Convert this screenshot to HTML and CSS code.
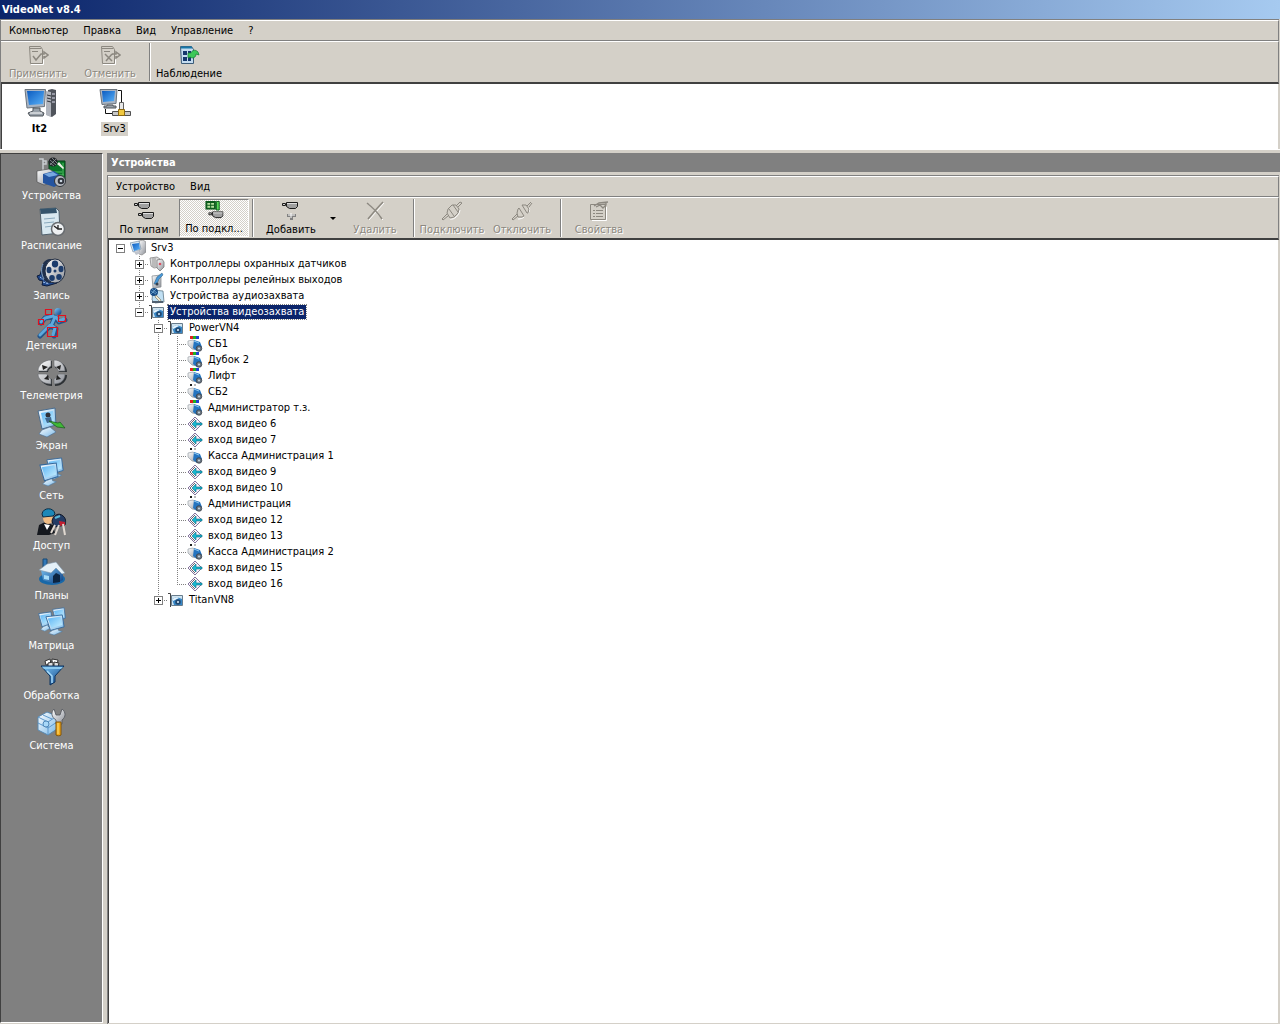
FILE: index.html
```html
<!doctype html>
<html lang="ru">
  <head>
    <meta charset="UTF-8" />
    <meta name="viewport" content="width=device-width, initial-scale=1.0" />
    <title>VideoNet v8.4</title>
    <link rel="stylesheet" href="styles.css">
  </head>
  <body>
    <!-- Icon sprite -->
    <svg class="sprite" width="0" height="0" aria-hidden="true">
      <defs>
        <linearGradient id="g-screen" x1="0" y1="0" x2="1" y2="1">
          <stop offset="0" stop-color="#0c5cc0" />
          <stop offset="1" stop-color="#58b0f8" />
        </linearGradient>
        <linearGradient id="g-ice" x1="0" y1="0" x2="1" y2="1">
          <stop offset="0" stop-color="#ffffff" />
          <stop offset="1" stop-color="#78b8e8" />
        </linearGradient>
        <linearGradient id="g-glass" x1="0" y1="0" x2="1" y2="1">
          <stop offset="0" stop-color="#5cb4f4" />
          <stop offset="1" stop-color="#c8f0ff" />
        </linearGradient>
        <linearGradient id="g-metal" x1="0" y1="0" x2="1" y2="1">
          <stop offset="0" stop-color="#ffffff" />
          <stop offset="1" stop-color="#8c9098" />
        </linearGradient>
        <linearGradient id="g-blue" x1="0" y1="0" x2="1" y2="1">
          <stop offset="0" stop-color="#7cc8f8" />
          <stop offset="1" stop-color="#0c3c80" />
        </linearGradient>
      </defs>

      <symbol id="cam-gray" viewBox="0 0 16 9">
        <path d="M4.500 1.500h11v4l-2 2h-6l-3-2z" fill="#a0a0a0" stroke="#1c1c1c" />
        <path d="M5 2.500h10" stroke="#e0e0e0" />
        <path d="M.5 2.500h3v2h-3z" fill="#d0d0d0" stroke="#1c1c1c" />
      </symbol>
      <symbol id="i-apply" viewBox="0 0 22 20">
        <path d="M4 19.500h12.500V13" fill="none" stroke="#fff" />
        <path d="M2.500 1.500h11l2 3v14h-12z" fill="#d4d0c8" stroke="#8c8880" />
        <path d="M3 3.500h11M5 6.500h6" stroke="#8c8880" />
        <path d="M6 11l3 4 5-6h3V7l4 3-4 3v-2" fill="none" stroke="#8c8880" stroke-width="1.500" />
      </symbol>
      <symbol id="i-cancel" viewBox="0 0 22 20">
        <path d="M4 19.500h12.500V13" fill="none" stroke="#fff" />
        <path d="M2.500 1.500h11l2 3v14h-12z" fill="#d4d0c8" stroke="#8c8880" />
        <path d="M3 3.500h11M5 6.500h6" stroke="#8c8880" />
        <path d="M6 9l7 7M13 9l-6 7M13 9h4V7l4 3-4 3v-2" fill="none" stroke="#8c8880" stroke-width="1.500" />
      </symbol>
      <symbol id="i-watch" viewBox="0 0 22 20">
        <path d="M2.500 1.500h11l2 3v14h-12z" fill="#c4dcf0" stroke="#3c5c78" />
        <path d="M3 2.500h11" stroke="#1878a8" stroke-width="2" />
        <path d="M5 6h4v4H5zM10 6h3v4h-3zM5 12h4v4H5zM10 12h3v4h-3z" fill="#14386c" />
        <path d="M10 8h3c1-3 4-4 7-1l1 3-3-1c0 3-2 4-4 4l-2-1-2 1z" fill="#3cc858" stroke="#147830" stroke-width=".7" />
      </symbol>

      <symbol id="i-pc" viewBox="0 0 32 30">
        <path d="M24 2l4-1 4 1v24l-4 3-5-2z" fill="#50545c" />
        <path d="M22 3l5 1v25l-5-2z" fill="#b0b4bc" />
        <path d="M23 7l4 1M23 10l4 1M23 13l4 1" stroke="#30343c" />
        <path d="M28 6h3M28 10h3M28 14h3" stroke="#dde" />
        <path d="M1 1.500h20.500l-1 17L3 20z" fill="#a8b4c4" stroke="#6c747c" />
        <path d="M3 3h17l-1 13-14 1z" fill="url(#g-screen)" />
        <path d="M9 20h7v3l4 2-1 3H6l-2-3 5-2z" fill="#98a0a8" stroke="#50565c" />
        <path d="M6 25h12" stroke="#fff" />
      </symbol>
      <symbol id="i-pc-net" viewBox="0 0 32 30">
        <path d="M1 1.500h17l-1 14-14 1z" fill="#a8b4c4" stroke="#6c747c" />
        <path d="M3 3h13l-1 10-11 1z" fill="url(#g-screen)" />
        <path d="M8 17h6v1h3v2H5v-2h3z" fill="#98a0a8" stroke="#50565c" />
        <path d="M19 2.500h3.500V14M6.500 21v4.500H14" fill="none" stroke="#111" />
        <path d="M20.500 14.500h4v8h-4z" fill="#e8e8e8" stroke="#606060" />
        <path d="M13.500 23.500h18v4h-18z" fill="#c8c8c8" stroke="#505050" />
        <path d="M19.500 21.500h6v6h-6z" fill="#f0c840" stroke="#8c6810" />
      </symbol>

      <symbol id="i-devices" viewBox="0 0 32 32">
        <path d="M13 4h16v19H13z" fill="#0a7428" stroke="#053c14" />
        <path d="M16 15h10M20 18h8M27 6v12" stroke="#50c060" />
        <path d="M3 2h4v13H3M7 4h3v3H7" fill="none" stroke="#c8ccd0" stroke-width="1.500" />
        <circle cx="17" cy="5" r="4.500" fill="#202428" />
        <path d="M14 3l6 5M14 6l4 3M16 1l5 5M20 2l-6 6" stroke="#90989c" stroke-width=".8" />
        <path d="M21 7l6 5 1-1-5-6z" fill="#f0f0e8" />
        <path d="M1 14l12-2 7 4v9L8 28l-7-3z" fill="url(#g-metal)" stroke="#444" stroke-width=".6" />
        <path d="M7 17l11-3 6 4v9l-6 3-11-4z" fill="#2454a0" />
        <path d="M8 17l9-2 5 3-9 2z" fill="#78a8e0" />
        <circle cx="24" cy="24" r="5.500" fill="#b8bcc4" stroke="#303438" />
        <circle cx="25" cy="24" r="3.300" fill="#30343c" />
        <circle cx="25" cy="24" r="1.300" fill="#c8d4e0" />
      </symbol>
      <symbol id="i-schedule" viewBox="0 0 32 32">
        <path d="M4 2l16-1 3 3 1 22-18 2z" fill="#d8e8f0" stroke="#50606c" />
        <path d="M4 2l16-1 1 5-16 1z" fill="#34546c" />
        <path d="M8 12l11-1M8 16l10-1M9 20l8-1" stroke="#88a8bc" />
        <circle cx="22" cy="22" r="6.500" fill="#eef0f2" stroke="#686c70" stroke-width="1.500" />
        <path d="M22 18v4h4M18 19l4 3" fill="none" stroke="#222" stroke-width="1.300" />
      </symbol>
      <symbol id="i-record" viewBox="0 0 32 32">
        <path d="M7 8L4 18l-3 1 2 4 4 1-1 4 5 1 10-3z" fill="#20488c" stroke="#0c1c3c" />
        <path d="M4 20l8 6M7 25l6 2" stroke="#a8c8f0" stroke-dasharray="2 1" />
        <ellipse cx="14" cy="14" rx="9" ry="12" fill="#20304c" />
        <path d="M7 7c-2 4-2 10 1 15" fill="none" stroke="#88a8cc" />
        <ellipse cx="19" cy="14" rx="10" ry="12" fill="url(#g-metal)" stroke="#202c40" />
        <g fill="#1c3c6c">
          <ellipse cx="19" cy="7" rx="3.200" ry="3.400" />
          <ellipse cx="25" cy="12" rx="2.500" ry="3.200" />
          <ellipse cx="23" cy="20" rx="2.800" ry="3" />
          <ellipse cx="16" cy="21" rx="2.800" ry="3" />
          <ellipse cx="13" cy="13" rx="2.500" ry="3.200" />
          <circle cx="19" cy="14" r="1.500" />
        </g>
      </symbol>
      <symbol id="i-detect" viewBox="0 0 32 32">
        <g fill="none" stroke-linecap="round" stroke-linejoin="round">
          <path d="M19 10l-4 10M17 10l-8 1-4 5M20 11l3 4 6-2M15 19l5 3-2 7M14 19l-5 5-5 5" stroke="#245488" stroke-width="5" />
          <path d="M19 10l-4 9M17 9l-8 2-4 4M20 10l3 4 5-2M15 18l4 3-2 7M14 18l-5 5-5 5" stroke="#5ca8dc" stroke-width="3" />
        </g>
        <circle cx="22" cy="4.500" r="3.500" fill="url(#g-blue)" />
        <path d="M9.500 2.500h6v5h-6zM22.500 8.500h7v6h-7zM2.500 12.500h5v5h-5zM11.500 20.500h10v9h-10z" fill="none" stroke="#e01020" stroke-width="1.200" />
      </symbol>
      <symbol id="i-ptz" viewBox="0 0 32 32">
        <g fill="#2c3034">
          <path d="M16 4v7c-2 0-4 2-4 4H3C3 9 9 4 16 4zM19 4v7c2 0 4 2 4 4h8c0-6-5-11-12-11zM3 18h9c0 2 2 4 4 4v7C9 29 3 24 3 18zM31 18h-8c0 2-2 4-4 4v7c7 0 12-5 12-11z" />
        </g>
        <g fill="url(#g-metal)" stroke="#686c70" stroke-width=".6">
          <path d="M15 3v6c-2 1-4 3-4 5H2C2 8 8 3 15 3zM18 3v6c2 1 4 3 4 5h7c0-6-4-11-11-11zM2 17h9c0 2 2 4 4 5v5C8 27 2 23 2 17zM29 17h-7c0 2-2 4-4 5v5c7 0 11-4 11-10z" />
        </g>
        <path d="M6 8l6 2-5 3zM25 8l-5 2 4 3zM8 22l4-4 1 5zM25 22l-4-4-1 5z" fill="#222" />
      </symbol>
      <symbol id="i-screen" viewBox="0 0 32 32">
        <path d="M2 4l17-3 1 17-14 4z" fill="url(#g-ice)" stroke="#486c90" />
        <path d="M5 6l12-2 1 12-10 3z" fill="url(#g-glass)" />
        <circle cx="12" cy="8" r="2.500" fill="#303038" />
        <path d="M9 11l6-1 1 5-5 1z" fill="#406890" />
        <path d="M6 23l8-3 6 5-9 5-8-3z" fill="url(#g-ice)" stroke="#486c90" stroke-width=".6" />
        <path d="M13 14l9 2 2-1 5 6-8-1z" fill="#40b838" stroke="#18581c" stroke-width=".7" />
      </symbol>
      <symbol id="i-monitor" viewBox="0 0 22 24" preserveAspectRatio="none">
        <path d="M1 3l18-2 2 13-15 4z" fill="url(#g-ice)" stroke="#34689c" />
        <path d="M3 5l14-2 2 9-12 3z" fill="url(#g-glass)" />
        <path d="M8 18l6-2 1 2 4 1-9 4-6-2z" fill="url(#g-ice)" stroke="#4878a4" stroke-width=".6" />
      </symbol>
      <symbol id="i-network" viewBox="0 0 32 32">
        <use href="#i-monitor" x="10" y="0" width="18" height="23" />
        <use href="#i-monitor" x="3" y="5" width="20" height="25" />
      </symbol>
      <symbol id="i-access" viewBox="0 0 32 32">
        <path d="M1 28l2-10 6-3 8 3 2 8-6 2z" fill="#15181e" />
        <ellipse cx="12" cy="11" rx="5" ry="6" fill="#f0bc84" />
        <path d="M6 7c1-7 12-7 13 0l-2 2-10 1z" fill="#1c88b8" stroke="#0c2c44" />
        <path d="M8 17l3 6 3-5z" fill="#fff" />
        <path d="M16 14c1-6 7-9 11-5 3 2 3 6 2 9l-5 1-6 1z" fill="#243c64" stroke="#101828" />
        <path d="M19 11l5-2" stroke="#58b8d8" stroke-width="2" />
        <path d="M23 14l6 1v3l-5 1z" fill="#c02030" />
        <path d="M19 18l-4 8M23 18l-4 10M27 17l2 11" stroke="#e0d8d0" stroke-width="2" />
      </symbol>
      <symbol id="i-plans" viewBox="0 0 32 32">
        <ellipse cx="16" cy="22" rx="13" ry="6" fill="#1868a8" />
        <path d="M7 2h4v12H7z" fill="#3078b8" stroke="#164874" />
        <path d="M5 13l9 1 5-5 8 6v8l-8 4-12-4z" fill="url(#g-blue)" />
        <path d="M3 13l8-6 9-2 9 11-3 1-6-6-5 5z" fill="#e4f0f8" stroke="#7c94a8" stroke-width=".6" />
        <path d="M17 19l3-3 4 2v7l-7 1z" fill="#0c2440" />
        <path d="M8 18l5 1v4l-5-1z" fill="#a8dcf8" />
      </symbol>
      <symbol id="i-matrix" viewBox="0 0 32 32">
        <use href="#i-monitor" x="2" y="4" width="15" height="21" />
        <use href="#i-monitor" x="16" y="0" width="14" height="19" />
        <use href="#i-monitor" x="9" y="7" width="20" height="22" />
      </symbol>
      <symbol id="i-process" viewBox="0 0 32 32">
        <path d="M9 4l5-2 1 5-5 1zM16 2l6 1-1 5-5-1z" fill="#fff" stroke="#333" />
        <path d="M12 6l5-1v5h-5zM18 5l5 1-1 4h-4z" fill="#ddd" stroke="#333" />
        <path d="M5 9h23l-9 10v6l-5 3v-9z" fill="url(#g-blue)" stroke="#0c3460" />
        <path d="M6 10h21l-2 2H8z" fill="#8ccaf0" />
        <path d="M11 14l5 5v7" fill="none" stroke="#a8dcfa" stroke-width="1.500" />
      </symbol>
      <symbol id="i-system" viewBox="0 0 32 32">
        <path d="M2 10l9-5 10 4v13l-9 6-10-5z" fill="url(#g-ice)" stroke="#5888b0" />
        <path d="M2 10l10 5 9-6M12 15v13M7 8l9 4M2 16l10 5 9-6" fill="none" stroke="#5c98cc" />
        <circle cx="10" cy="17" r="3" fill="#a8d8f8" stroke="#5088b8" />
        <path d="M18 2l2 6h4l2-6c4 3 4 8 0 11v4h-6v-4c-5-3-5-8-2-11z" fill="url(#g-metal)" stroke="#50545c" stroke-width=".8" />
        <path d="M20 15h5v13c-1 1-4 1-5 0z" fill="#f0a818" stroke="#80540c" />
        <path d="M22 16v11" stroke="#fce080" />
      </symbol>

      <symbol id="i-types" viewBox="0 0 22 20">
        <use href="#cam-gray" x="1" y="0" width="16" height="9" />
        <use href="#cam-gray" x="5" y="10" width="16" height="9" />
      </symbol>
      <symbol id="i-conn" viewBox="0 0 22 20">
        <path d="M2 0h11v9H2z" fill="#0c5c1c" />
        <path d="M4 2h3v2H4zM8 2h3v2H8zM4 5h3v2H4zM8 5h3v2H8z" fill="#b8e0a0" />
        <path d="M13.500.5h3v9h-3z" fill="#58d858" stroke="#0c5c1c" />
        <use href="#cam-gray" x="5" y="10" width="16" height="9" />
      </symbol>
      <symbol id="i-add" viewBox="0 0 22 20">
        <use href="#cam-gray" x="2" y="0" width="16" height="9" />
        <path d="M7 13h9v3h-3v3h-3v-3H7z" fill="#808080" />
        <path d="M8 14h7M11 12v5" stroke="#fff" />
      </symbol>
      <symbol id="i-delete" viewBox="0 0 22 20">
        <path d="M5 3l14 16M20 2L5 19" stroke="#fff" />
        <path d="M3 2c5 4 11 10 15 16M19 1C13 7 9 12 4 18" fill="none" stroke="#8c8880" stroke-width="1.500" />
      </symbol>
      <symbol id="i-plug" viewBox="0 0 22 20">
        <path d="M9 18c4 1 9-3 10-9" fill="none" stroke="#fff" />
        <g fill="none" stroke="#8c8880">
          <path d="M1 18l5-5M2 19l5-4M1 18l1 1M15 5l4-4M17 6l4-4M19 1l2 1" />
          <path d="M6 12l1-4 4-4 4 0 3 4-1 4-4 4-4 1z" />
          <path d="M8 8l5 7M12 4l5 7" />
        </g>
      </symbol>
      <symbol id="i-unplug" viewBox="0 0 22 20">
        <path d="M7 18c3 0 5-1 6-2M17 12c2-2 2-4 1-5" fill="none" stroke="#fff" />
        <g fill="none" stroke="#8c8880">
          <path d="M1 18l5-5M2 19l5-4M1 18l1 1M16 5l4-4M18 6l3-4" />
          <path d="M6 12l1-4 1-1 5 8-2 1-4 0zM11 4l4 0 3 4-1 4-1 0z" />
        </g>
      </symbol>
      <symbol id="i-props" viewBox="0 0 22 20">
        <path d="M4 19.500h14.500V6" fill="none" stroke="#fff" />
        <path d="M2.500 3.500h15v15h-15z" fill="none" stroke="#8c8880" />
        <path d="M5 9.500h2M8 9.500h7M5 12.500h2M8 12.500h7M5 15.500h2M8 15.500h7" stroke="#8c8880" />
        <path d="M6 5l5-3 9-1M8 6l4-2 3 3 3-3v-3" fill="none" stroke="#8c8880" stroke-width="1.300" />
      </symbol>

      <symbol id="t-server" viewBox="0 0 16 16">
        <path d="M9 1l4-1 3 2v10l-4 3-3-1z" fill="url(#g-metal)" stroke="#888" stroke-width=".7" />
        <path d="M0 3l9-2 2 8-8 3z" fill="#d8e8f4" stroke="#7890a8" stroke-width=".7" />
        <path d="M2 4l7-1 1 6-6 2z" fill="url(#g-screen)" />
        <path d="M4 12l4-1 3 2-5 2z" fill="#c0c4cc" />
      </symbol>
      <symbol id="t-guard" viewBox="0 0 16 16">
        <path d="M1 2l7-1 3 2v8l-6 1-3-2z" fill="#dcdcdc" stroke="#888" stroke-width=".8" />
        <path d="M4 2v9M6 2v9" stroke="#999" />
        <path d="M8 4l5-1 2 3v5l-4 4-3-3z" fill="url(#g-metal)" stroke="#777" stroke-width=".8" />
        <circle cx="11" cy="8" r="1.300" fill="#d85060" />
      </symbol>
      <symbol id="t-relay" viewBox="0 0 16 16">
        <path d="M3 4l9-1v12l-8 1z" fill="url(#g-metal)" stroke="#8c9094" stroke-width=".8" />
        <path d="M5 12l3-7 5-4 1 2-4 4-2 5z" fill="#4898d8" stroke="#28587c" stroke-width=".5" />
        <circle cx="8" cy="12" r="1.500" fill="#344050" />
      </symbol>
      <symbol id="t-audio" viewBox="0 0 16 16">
        <path d="M4 2l10 1 1 11-9 1-3-3z" fill="#c0e0f4" stroke="#607888" stroke-width=".8" />
        <circle cx="5" cy="4" r="4" fill="#184c84" />
        <path d="M2 3l5 3M3 1l5 4M7 1L2 6" stroke="#80b8e0" stroke-width=".7" />
        <path d="M7 7l5 5-1 2-5-5z" fill="#f0e8d0" stroke="#605840" stroke-width=".5" />
        <path d="M3 13h11v2H3z" fill="#506070" />
      </symbol>
      <symbol id="t-video" viewBox="0 0 16 16">
        <path d="M0 1.500h2.500V15" fill="none" stroke="#444" />
        <path d="M3.500 3.500h11v10h-11z" fill="#d0e4f0" stroke="#687c8c" />
        <path d="M4 7l5-2 5 2v6H6z" fill="#3888c8" />
        <path d="M4 7l5-2 2 1-6 3z" fill="#e8f4fc" />
        <circle cx="10" cy="10" r="2.800" fill="#204870" />
        <circle cx="10" cy="10" r="1" fill="#e0f0ff" />
      </symbol>
      <symbol id="t-body" viewBox="0 0 16 16">
        <path d="M1 5l5-1 7 5-3 5-5-1-4-4z" fill="url(#g-metal)" stroke="#889098" stroke-width=".6" />
        <path d="M7 4l6 2 2 5-5 4-4-3z" fill="#2474c0" />
        <path d="M7 5l5 2" stroke="#90c8f0" />
        <circle cx="12" cy="12.500" r="2.800" fill="#687480" stroke="#303840" stroke-width=".7" />
        <circle cx="12" cy="12.500" r="1" fill="#c8d8e4" />
      </symbol>
      <symbol id="t-cam-color" viewBox="0 0 16 16">
        <use href="#t-body" width="16" height="16" />
        <path d="M3 0h3v3H3z" fill="#e02020" />
        <path d="M6 0h3v3H6z" fill="#20b020" />
        <path d="M9 0h3v3H9z" fill="#2040d0" />
      </symbol>
      <symbol id="t-cam-bw" viewBox="0 0 16 16">
        <use href="#t-body" width="16" height="16" />
        <path d="M3 0h2v2H3z" fill="#202020" />
        <path d="M7 0h2v2H7z" fill="#b8b8b8" />
      </symbol>
      <symbol id="t-input" viewBox="0 0 16 16">
        <path d="M8 1l7 7-7 7-7-7z" fill="#f8f4fc" stroke="#84749c" />
        <path d="M8 3L3 8l5 5M9 5L6 8l3 3" fill="none" stroke="#444" stroke-width=".8" />
        <path d="M5 8l4-4v3h6v2H9v3z" fill="#18b8d0" stroke="#086880" stroke-width=".6" />
      </symbol>
    </svg>

    <div class="window">
      <header class="titlebar">VideoNet v8.4</header>

      <div class="top-frame">
        <nav class="menubar">
          <button>Компьютер</button>
          <button>Правка</button>
          <button>Вид</button>
          <button>Управление</button>
          <button>?</button>
        </nav>
        <div class="toolbar">
          <button class="tool" disabled><svg class="tool-icon"><use href="#i-apply" /></svg>Применить</button>
          <button class="tool" disabled><svg class="tool-icon"><use href="#i-cancel" /></svg>Отменить</button>
          <span class="separator"></span>
          <button class="tool"><svg class="tool-icon"><use href="#i-watch" /></svg>Наблюдение</button>
        </div>
        <div class="computers">
          <button class="computer current"><svg class="computer-icon"><use href="#i-pc" /></svg><span>It2</span></button>
          <button class="computer selected"><svg class="computer-icon"><use href="#i-pc-net" /></svg><span>Srv3</span></button>
        </div>
      </div>

      <div class="workspace">
        <nav class="sidebar">
          <button class="side-item"><svg class="side-icon"><use href="#i-devices" /></svg>Устройства</button>
          <button class="side-item"><svg class="side-icon"><use href="#i-schedule" /></svg>Расписание</button>
          <button class="side-item"><svg class="side-icon"><use href="#i-record" /></svg>Запись</button>
          <button class="side-item"><svg class="side-icon"><use href="#i-detect" /></svg>Детекция</button>
          <button class="side-item"><svg class="side-icon"><use href="#i-ptz" /></svg>Телеметрия</button>
          <button class="side-item"><svg class="side-icon"><use href="#i-screen" /></svg>Экран</button>
          <button class="side-item"><svg class="side-icon"><use href="#i-network" /></svg>Сеть</button>
          <button class="side-item"><svg class="side-icon"><use href="#i-access" /></svg>Доступ</button>
          <button class="side-item"><svg class="side-icon"><use href="#i-plans" /></svg>Планы</button>
          <button class="side-item"><svg class="side-icon"><use href="#i-matrix" /></svg>Матрица</button>
          <button class="side-item"><svg class="side-icon"><use href="#i-process" /></svg>Обработка</button>
          <button class="side-item"><svg class="side-icon"><use href="#i-system" /></svg>Система</button>
        </nav>

        <main class="content">
          <h1 class="content-title">Устройства</h1>
          <div class="panel">
            <nav class="menubar">
              <button>Устройство</button>
              <button>Вид</button>
            </nav>
            <div class="toolbar">
              <button class="tool"><svg class="tool-icon"><use href="#i-types" /></svg>По типам</button>
              <button class="tool pressed"><svg class="tool-icon"><use href="#i-conn" /></svg>По подкл...</button>
              <span class="separator"></span>
              <button class="tool"><svg class="tool-icon"><use href="#i-add" /></svg>Добавить</button>
              <button class="tool-arrow" aria-label="Добавить: список"></button>
              <button class="tool" disabled><svg class="tool-icon"><use href="#i-delete" /></svg>Удалить</button>
              <span class="separator"></span>
              <button class="tool" disabled><svg class="tool-icon"><use href="#i-plug" /></svg>Подключить</button>
              <button class="tool" disabled><svg class="tool-icon"><use href="#i-unplug" /></svg>Отключить</button>
              <span class="separator"></span>
              <button class="tool" disabled><svg class="tool-icon"><use href="#i-props" /></svg>Свойства</button>
            </div>

            <div class="tree">
              <ul>
                <li>
                  <div class="node"><button class="toggle open" aria-label="Свернуть"></button><svg><use href="#t-server" /></svg><span>Srv3</span></div>
                  <ul>
                    <li><div class="node"><button class="toggle" aria-label="Развернуть"></button><svg><use href="#t-guard" /></svg><span>Контроллеры охранных датчиков</span></div></li>
                    <li><div class="node"><button class="toggle" aria-label="Развернуть"></button><svg><use href="#t-relay" /></svg><span>Контроллеры релейных выходов</span></div></li>
                    <li><div class="node"><button class="toggle" aria-label="Развернуть"></button><svg><use href="#t-audio" /></svg><span>Устройства аудиозахвата</span></div></li>
                    <li>
                      <div class="node selected"><button class="toggle open" aria-label="Свернуть"></button><svg><use href="#t-video" /></svg><span>Устройства видеозахвата</span></div>
                      <ul>
                        <li>
                          <div class="node"><button class="toggle open" aria-label="Свернуть"></button><svg><use href="#t-video" /></svg><span>PowerVN4</span></div>
                          <ul>
                            <li><div class="node leaf"><svg><use href="#t-cam-color" /></svg><span>СБ1</span></div></li>
                            <li><div class="node leaf"><svg><use href="#t-cam-color" /></svg><span>Дубок 2</span></div></li>
                            <li><div class="node leaf"><svg><use href="#t-cam-color" /></svg><span>Лифт</span></div></li>
                            <li><div class="node leaf"><svg><use href="#t-cam-bw" /></svg><span>СБ2</span></div></li>
                            <li><div class="node leaf"><svg><use href="#t-cam-color" /></svg><span>Администратор т.з.</span></div></li>
                            <li><div class="node leaf"><svg><use href="#t-input" /></svg><span>вход видео 6</span></div></li>
                            <li><div class="node leaf"><svg><use href="#t-input" /></svg><span>вход видео 7</span></div></li>
                            <li><div class="node leaf"><svg><use href="#t-cam-bw" /></svg><span>Касса Администрация 1</span></div></li>
                            <li><div class="node leaf"><svg><use href="#t-input" /></svg><span>вход видео 9</span></div></li>
                            <li><div class="node leaf"><svg><use href="#t-input" /></svg><span>вход видео 10</span></div></li>
                            <li><div class="node leaf"><svg><use href="#t-cam-bw" /></svg><span>Администрация</span></div></li>
                            <li><div class="node leaf"><svg><use href="#t-input" /></svg><span>вход видео 12</span></div></li>
                            <li><div class="node leaf"><svg><use href="#t-input" /></svg><span>вход видео 13</span></div></li>
                            <li><div class="node leaf"><svg><use href="#t-cam-bw" /></svg><span>Касса Администрация 2</span></div></li>
                            <li><div class="node leaf"><svg><use href="#t-input" /></svg><span>вход видео 15</span></div></li>
                            <li><div class="node leaf"><svg><use href="#t-input" /></svg><span>вход видео 16</span></div></li>
                          </ul>
                        </li>
                        <li><div class="node"><button class="toggle" aria-label="Развернуть"></button><svg><use href="#t-video" /></svg><span>TitanVN8</span></div></li>
                      </ul>
                    </li>
                  </ul>
                </li>
              </ul>
            </div>
          </div>
        </main>
      </div>
    </div>
  </body>
</html>
```
FILE: styles.css
```css
* {
  box-sizing: border-box;
}
body {
  margin: 0;
  font-family: Tahoma, 'DejaVu Sans Condensed', sans-serif;
  font-size: 11px;
  line-height: 14px;
  color: #000;
  background-color: #d4d0c8;
}
button {
  margin: 0;
  padding: 0;
  border: none;
  background: none;
  font: inherit;
  color: inherit;
  white-space: nowrap;
}
ul {
  margin: 0;
  padding: 0;
  list-style: none;
}
.sprite {
  position: absolute;
}
.window {
  display: flex;
  flex-direction: column;
  min-height: 100vh;
}
.titlebar {
  height: 19px;
  padding: 3px 2px;
  font-weight: bold;
  color: #fff;
  background: linear-gradient(to right, #0a246a, #a6caf0);
}

/* Menus and toolbars */
.top-frame {
  margin-right: 1px;
  border-top: 1px solid #808080;
  border-left: 1px solid #808080;
}
.menubar {
  display: flex;
  gap: 15px;
  height: 21px;
  padding: 0 8px;
  border-top: 1px solid #fff;
  border-right: 1px solid #808080;
  border-bottom: 1px solid #808080;
}
.toolbar {
  display: flex;
  height: 43px;
  padding: 1px 0 1px 1px;
  border-top: 1px solid #fff;
  border-right: 1px solid #808080;
  border-bottom: 2px solid #404040;
}
.tool {
  display: flex;
  flex-direction: column;
  align-items: center;
  width: 70px;
  padding-top: 2px;
}
.top-frame .tool {
  width: 72px;
}
.tool-icon {
  width: 22px;
  height: 20px;
  margin-bottom: 2px;
}
.tool:disabled {
  color: #8c8880;
  text-shadow: 1px 1px #fff;
}
.tool.pressed {
  border: 1px solid #fff;
  border-top-color: #808080;
  border-left-color: #808080;
  padding-top: 1px;
  background: repeating-conic-gradient(#fff 0 25%, #d4d0c8 0 50%) 0 0 / 2px 2px;
}
.separator {
  width: 2px;
  margin: 0 2px 0 3px;
  border-left: 1px solid #808080;
  border-right: 1px solid #fff;
}
.tool-arrow {
  width: 14px;
}
.tool-arrow::before {
  content: '';
  display: block;
  width: 0;
  margin: 0 auto;
  border: 3px solid transparent;
  border-top-color: #000;
  border-bottom: none;
}

/* Computers */
.computers {
  display: flex;
  height: 65px;
  padding-top: 4px;
  background-color: #fff;
  border-left: 1px solid #404040;
  border-right: 1px solid #d4d0c8;
}
.computer {
  display: flex;
  flex-direction: column;
  align-items: center;
  width: 75px;
}
.computer-icon {
  width: 32px;
  height: 30px;
  margin-bottom: 4px;
}
.computer span {
  padding: 0 2px;
}
.computer.current {
  font-weight: bold;
}
.computer.selected span {
  background-color: #d4d0c8;
}

/* Lower part */
.workspace {
  display: flex;
  flex: 1;
  gap: 4px;
  padding-top: 3px;
  border-top: 1px solid #fff;
}
.sidebar {
  display: flex;
  flex-direction: column;
  width: 103px;
  padding-top: 3px;
  margin-bottom: 1px;
  color: #fff;
  background-color: #808080;
  border: 1px solid #404040;
  border-right-color: #fff;
  border-bottom-color: #fff;
}
.side-item {
  display: flex;
  flex-direction: column;
  align-items: center;
  height: 50px;
}
.side-icon {
  width: 32px;
  height: 32px;
}
.content {
  display: flex;
  flex-direction: column;
  flex: 1;
}
.content-title {
  margin: 0 0 3px;
  padding: 3px 4px;
  height: 19px;
  font-size: 11px;
  color: #fff;
  background-color: #808080;
}
.panel {
  display: flex;
  flex-direction: column;
  flex: 1;
  margin-right: 1px;
  border-top: 1px solid #808080;
  border-left: 1px solid #808080;
}

/* Device tree */
.tree {
  flex: 1;
  padding-left: 2px;
  margin-bottom: 1px;
  background-color: #fff;
  border-left: 1px solid #404040;
  border-right: 1px solid #d4d0c8;
}
.tree ul ul {
  padding-left: 19px;
}
.tree ul ul > li {
  background:
    repeating-linear-gradient(#808080 0 1px, transparent 1px 2px) 9px 0 / 1px 100% no-repeat,
    repeating-linear-gradient(to right, #808080 0 1px, transparent 1px 2px) 9px 8px / 10px 1px no-repeat;
}
.tree ul ul > li:last-child {
  background-size: 1px 9px, 10px 1px;
}
.node {
  display: flex;
  align-items: center;
  height: 16px;
}
.node svg {
  width: 16px;
  height: 16px;
  margin-right: 3px;
}
.node span {
  padding: 0 2px;
}
.node.leaf {
  padding-left: 19px;
}
.node.selected span {
  color: #fff;
  background-color: #0a246a;
  outline: 1px dotted #808080;
}
.toggle {
  width: 9px;
  height: 9px;
  margin: 0 5px;
  border: 1px solid #808080;
  background:
    linear-gradient(#000, #000) 1px 3px / 5px 1px no-repeat,
    linear-gradient(#000, #000) 3px 1px / 1px 5px no-repeat,
    #fff;
}
.toggle.open {
  background: linear-gradient(#000, #000) 1px 3px / 5px 1px no-repeat, #fff;
}
```
